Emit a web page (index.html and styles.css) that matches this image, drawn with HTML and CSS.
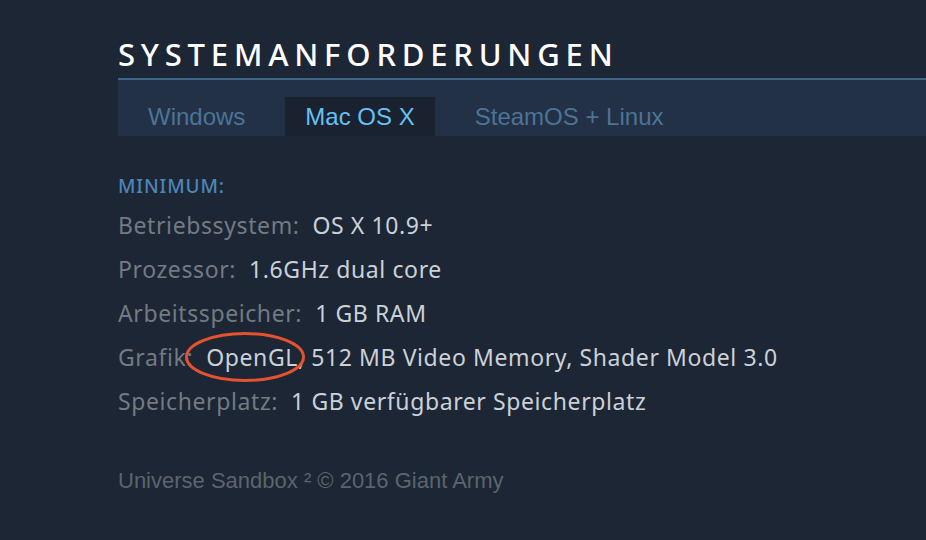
FILE: index.html
```html
<!DOCTYPE html>
<html lang="de">
<head>
<meta charset="utf-8">
<link rel="stylesheet" href="styles.css">
</head>
<body>
<div class="page">
  <h2 class="title">SYSTEMANFORDERUNGEN</h2>
  <div class="tabs">
    <div class="tab">Windows</div>
    <div class="tab active">Mac OS X</div>
    <div class="tab">SteamOS + Linux</div>
  </div>
  <div class="reqs">
    <div class="min">MINIMUM:</div>
    <div class="row"><span class="lbl">Betriebssystem:</span><span class="val">OS X 10.9+</span></div>
    <div class="row"><span class="lbl">Prozessor:</span><span class="val">1.6GHz dual core</span></div>
    <div class="row"><span class="lbl">Arbeitsspeicher:</span><span class="val">1 GB RAM</span></div>
    <div class="row"><span class="lbl">Grafik:</span><span class="val"><span class="mark">OpenGL,<svg class="ring" viewBox="0 0 122 52" aria-hidden="true"><ellipse cx="61" cy="26" rx="58.5" ry="23.5" fill="none" stroke="#e4522f" stroke-width="3"/></svg></span> 512 MB Video Memory, Shader Model 3.0</span></div>
    <div class="row"><span class="lbl">Speicherplatz:</span><span class="val">1 GB verfügbarer Speicherplatz</span></div>
  </div>
  <div class="legal">Universe Sandbox ² © 2016 Giant Army</div>
</div>
</body>
</html>
```

FILE: styles.css
```css
html, body {
  margin: 0;
  padding: 0;
  background: #1c2635;
}
.page {
  padding: 36px 0 0 118px;
  height: 540px;
  box-sizing: border-box;
  overflow: hidden;
}
.title {
  margin: 0;
  font-family: "Noto Sans", sans-serif;
  font-weight: 500;
  font-size: 31px;
  letter-spacing: 5.8px;
  line-height: 36px;
  color: #ffffff;
  padding-bottom: 6px;
  border-bottom: 2px solid #3f6686;
}
.tabs {
  display: flex;
  gap: 20px;
  padding: 17px 0 0 10px;
  background: #223145;
  font-family: "Liberation Sans", Arial, sans-serif;
  font-size: 24px;
}
.tab {
  padding: 0 20px;
  height: 39px;
  line-height: 39px;
  color: #4d7397;
}
.tab.active {
  background: #1a2230;
  color: #66c0f4;
}
.reqs {
  padding-top: 38px;
  font-family: "Noto Sans", sans-serif;
  font-size: 23px;
  letter-spacing: 0.6px;
}
.min {
  color: #4e86b5;
  font-size: 19px;
  font-weight: 500;
  letter-spacing: 0.9px;
  line-height: 24px;
  margin-bottom: 5px;
}
.row {
  line-height: 44px;
}
.lbl {
  color: #737a82;
  margin-right: 13px;
}
.val {
  color: #cbd1d7;
}
.mark {
  position: relative;
}
.ring {
  position: absolute;
  left: -22px;
  top: -10px;
  width: 122px;
  height: 52px;
}
.legal {
  margin-top: 45px;
  font-family: "Liberation Sans", Arial, sans-serif;
  font-size: 22px;
  color: #5c646c;
}
```
